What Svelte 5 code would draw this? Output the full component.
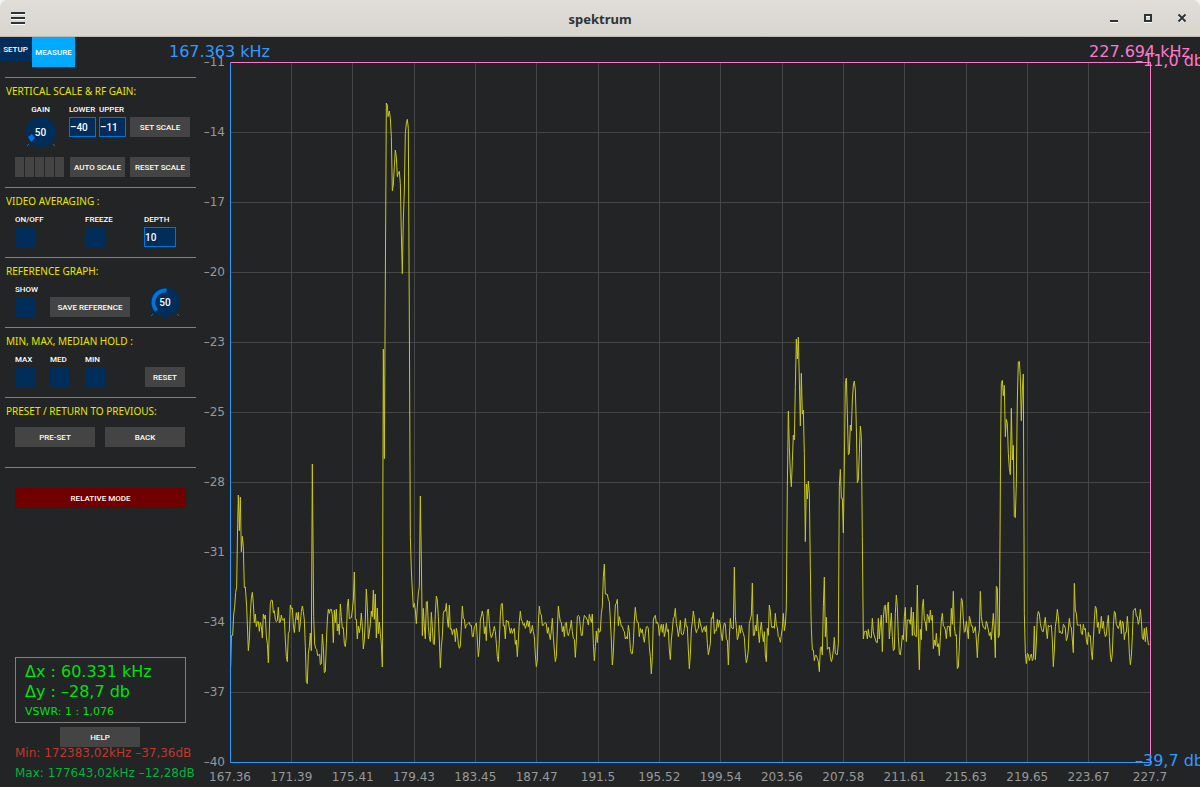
<script>
  const levels = ['–11', '–14', '–17', '–20', '–23', '–25', '–28', '–31', '–34', '–37', '–40'];
  const freqs = ['167.36', '171.39', '175.41', '179.43', '183.45', '187.47', '191.5', '195.52', '199.54', '203.56', '207.58', '211.61', '215.63', '219.65', '223.67', '227.7'];

  // Each run of the sweep has an origin and its samples, in thirds of a unit.
  const runs = [
    { x: 225, y: 440, d: '17,683 19,587 23,586 26,525 29,500 32,457 35,440 38,250 40,165 43,272 46,171 49,335 52,289 55,320 58,443 61,441 65,500 70,632 73,600 76,520 79,475 82,457 85,490 88,548 91,522 94,560 97,545 100,545 103,574 106,547 109,560 112,594 115,522 118,536 121,525 124,590 127,610 130,668 133,570 136,490 139,480 142,481 145,518 148,512 151,538 154,545 157,541 160,502 163,548 166,546 169,525 172,540 175,541 178,535 181,600 184,650 187,665 190,580 193,573 196,495 199,506 202,504 205,555 208,578 211,545 214,518 217,540 220,516 223,575 226,548 229,515 232,498 235,515 238,540 241,620 244,725 247,731 250,640 253,620 256,579 259,632 262,72 266,530 269,612 272,625 275,628 278,647 284,643 286,674 289,671 292,582 295,620 298,698 301,695 304,610 307,540 310,507 313,520 316,508 319,508 322,525 325,608 328,510 331,548 334,507 337,573 340,552 343,584 346,492 349,530 352,565 355,563 358,610 361,620 364,590 367,500 370,477 373,536 379,533 382,510 385,480 388,396 391,538 394,538 397,597 400,558 403,578 406,560 409,519 412,560 415,627 418,600 421,540 424,447 427,500 430,597 433,580 436,550 439,513 442,530 445,450 448,538 451,462 454,594 457,504 460,581 463,546 466,580 469,610 472,681 475,-273 478,56' },
    { x: 370, y: 60, d: '49,129 52,135 54,170 58,153 61,175 64,230 67,392 70,375 73,320 76,270 79,290 82,350 85,338 88,334 91,370 94,520 97,641 100,480 103,390 106,220 109,190 112,178 115,205 118,780' },
    { x: 225, y: 440, d: '556,290 559,390 562,450 565,502 568,490 571,510 574,551 577,500 580,460 583,440 586,168 589,360 592,587 595,505 598,560 601,597 604,486 607,484 610,560 613,590 616,605 619,517 622,560 625,611 628,614 631,520 634,468 637,480 640,530 643,600 646,683 649,620 652,590 655,520' },
    { x: 430, y: 540, d: '43,212 46,213 49,190 52,240 55,262 58,195 61,268 64,266 67,284 70,270 73,268 76,305 79,265 82,280 85,312 88,325 91,318 94,260 97,198 100,235 103,237 106,265 109,256 112,252 115,250 118,247 121,257 124,256 127,290 130,290 133,260 136,256 139,249 142,300 145,350 148,320 151,240 154,228 157,213 160,230 163,281 166,260 169,302 172,213 175,207 178,250 181,280 184,293 187,285 190,275 193,259 196,275 199,310 202,350 205,365 208,300 211,225 214,192 217,190 220,258 223,256 226,297 229,240 232,245 235,244 238,264 241,280 244,265 247,280 250,270 253,265 256,313 259,300 262,350 265,300 268,245 271,213 274,240 277,244 280,256 283,250 286,265 289,256 292,241 295,260 298,243 301,280 304,275 307,256 310,275 313,290 316,345 319,380 322,360 325,250 328,198 331,222 334,224 337,257 340,256 343,250 346,247 349,252 352,280 355,262 358,285 361,299 364,270 367,235 370,290 373,330 376,365 379,350 382,270 385,198 388,225 391,245 394,247 397,275 400,259 403,290 406,250 409,247 412,280 415,287 418,275 421,262 424,241 427,275 430,295 433,298 436,352 439,300 442,230 445,226 448,230 451,260 454,287 457,286 460,245 463,226 466,229 472,240 475,255 478,223 481,235 484,247 487,222 490,310 493,362 496,320 499,273 502,308 505,265 508,277 511,273 514,220 517,200 520,110 523,72 526,162 532,163 535,178 538,185 541,240 544,300 547,375 550,340 553,260 556,195 559,190 562,178 565,257 568,230 571,243 574,259 577,259 580,270 583,275 586,297 589,290 592,297 595,256 598,275 601,325 604,341 607,341 610,310 613,240 616,202 619,235 622,247 625,248 628,290 631,265 634,278 637,268 640,290 643,307 646,280 649,261 652,259 655,265 658,320 661,350 664,402 667,350 670,240 673,230 676,226 679,250 682,246 685,255 688,287 691,265 694,253 697,277 700,253 703,290 706,275 709,250 712,275 715,268 718,330 721,359 724,300 727,270 730,235 733,230 736,205 739,250 742,265 745,290 748,270 751,241 754,282 757,284 760,283 763,265 766,235 769,260 772,260 775,330 778,386 781,345 784,270 787,245 790,213 793,235 796,265 799,278 802,268 805,265 808,235 811,250 814,262 817,277 820,268 823,260 826,275 829,257' },
    { x: 700, y: 540, d: '22,310 25,344 28,330 31,310 34,233 37,235 40,217 43,281 46,270 49,272 52,238 55,262 58,241 61,255 64,285 67,302 70,265 73,249 76,252 79,298 82,300 85,375 88,290 91,235 94,263 100,266 103,81 106,230 109,262 112,299 115,290 118,256 121,280 124,256 127,272 130,280 133,292 136,340 139,368 142,355 145,330 148,250 151,238 154,225 157,129 160,287 163,286 166,256 169,273 172,223 175,275 178,308 181,270 184,246 187,280 190,305 193,275 196,345 199,365 202,265 205,286 208,195 211,213 214,258 217,264 220,258 223,265 226,220 229,256 232,263 235,290 238,293 241,307 244,285 247,262 250,220 253,272 256,255 259,200' },
    { x: 770, y: 320, d: '52,500 55,273 58,380 61,460 64,500 67,425 70,345 73,360 76,200 79,57 82,117 85,51 88,180 91,318 94,160 97,282 100,270 103,400 106,665 109,492 112,537 115,483 118,520 121,740' },
    { x: 700, y: 540, d: '333,220 334,265 337,330 340,330 343,362 346,346 349,346 352,355 355,365 358,395 361,325 364,320 367,345 370,200 373,111 376,290 379,232 382,328 388,321 391,350 394,365 397,355 400,330 403,292 406,341 412,344 415,310' },
    { x: 770, y: 320, d: '208,500 211,448 214,535 217,535 220,639 223,440 226,190 229,174 232,280 235,404 238,400 241,315 244,332 247,240 250,195 253,183 256,210 259,320 262,488 265,480 268,400 271,318 274,350 277,650' },
    { x: 700, y: 540, d: '490,297 493,275 499,273 502,297 505,268 508,290 514,293 517,235 520,275 523,288 529,307 532,308 535,235 538,297 541,255 544,225 547,335 550,235 553,200 556,195 559,248 562,200 565,186 568,297 571,260 574,219 577,290 580,332 583,328 586,220 589,165 592,200 595,290 598,340 601,345 604,320 607,286 610,299 613,230 616,202 619,305 622,240 628,240 631,253 634,202 637,287 640,216 643,285 649,290 652,135 655,290 658,389 661,268 664,299 667,200 670,178 673,240 676,245 679,272 682,223 685,230 688,248 691,210 694,241 697,225 700,326 703,300 706,317 709,280 712,320 715,311 718,347 721,290 724,240 727,220 730,258 733,260 736,270 739,296 742,259 748,259 751,290 754,205 757,253 760,154 763,260 766,287 769,284 772,386 775,381 778,320 781,240 784,175 787,182 790,240 793,277 796,273 799,244 802,268 805,296 808,229 811,240 814,258 817,258 820,279 823,270 826,260 829,300 832,353 835,290 838,270' },
    { x: 980, y: 340, d: '1,754 4,830 7,850 10,862 13,863 16,868 19,844 22,855 25,870 28,887 31,877 34,899 37,860 40,820 43,870 46,953 49,739 52,745 55,893 58,885 60,600 62,300 64,130 67,121 70,167 73,136 76,290 79,238 82,250 85,340 88,385 91,404 94,205 97,360 100,316 103,530 106,533 109,430 112,180 115,66 118,64 121,110 124,242 127,150 130,102 133,820 136,940 139,971 142,940 145,943 148,962 151,950 154,942 157,962 160,955 163,858 166,959 169,910 172,830 175,814 178,822 181,850 184,865 187,874 190,875 193,850 196,832 199,870 202,896 205,856 208,860 214,856 217,900 220,980 223,930 226,860 229,840 232,808 235,830 238,878 241,874 244,880 247,880 250,853 253,856 256,865 259,902 262,893 265,870 268,835 271,860 274,862 277,900 280,938 283,730 286,810 289,820 292,855 298,856 301,853 304,880 307,884 310,853 313,870 316,865 319,900 322,914 325,877 328,889 331,887 334,935 337,959 340,900 343,840 346,799 349,805 352,862 355,847 358,881 361,865 364,829 367,865 370,844 373,875 376,890 379,885 382,850 385,826 388,890 391,945 394,965 397,940 400,860 403,814 406,818 409,853 415,866 418,856 421,841 424,881 427,844 430,850 433,899 436,878 439,877 442,829 445,870 448,940 451,974 454,950 457,890 460,812 466,805 469,829 472,830 475,853 478,840 481,808 484,840 487,893 490,899 493,865 496,905 499,862 502,890 505,914 508,914' }
  ];

  const trace = runs
    .flatMap((r) =>
      r.d.split(' ').map((p) => {
        const [px, py] = p.split(',').map(Number);
        return `${(r.x + px / 3 - 230.5).toFixed(2)},${(r.y + py / 3 - 62.5).toFixed(2)}`;
      })
    )
    .join(' ');
</script>

<div class="window">
  <header class="titlebar">
    <button class="icon" aria-label="Menu">
      <svg width="16" height="14" viewBox="0 0 16 14"><path d="M1 2h14v2H1zM1 7h14v2H1zM1 12h14v2H1z" fill="#fff" /><path d="M1 1h14v2H1zM1 6h14v2H1zM1 11h14v2H1z" fill="#2e3436" /></svg>
    </button>
    <h1>spektrum</h1>
    <div class="controls">
      <button class="icon" aria-label="Minimize"><svg width="10" height="10" viewBox="0 0 10 10"><path d="M1 8h8v2H1z" fill="#fff" /><path d="M1 7h8v2H1z" fill="#2e3436" /></svg></button>
      <button class="icon" aria-label="Maximize"><svg width="10" height="10" viewBox="0 0 10 10"><path d="M2 3h6v6H2z" fill="none" stroke="#fff" stroke-width="2" /><path d="M2 2h6v6H2z" fill="none" stroke="#2e3436" stroke-width="2" /></svg></button>
      <button class="icon" aria-label="Close"><svg width="10" height="10" viewBox="0 0 10 10"><path d="M2 3l6 6M8 3l-6 6" stroke="#fff" stroke-width="2" /><path d="M1.5 1.5l7 7M8.500 1.500l-7 7" stroke="#2e3436" stroke-width="2" /></svg></button>
    </div>
  </header>

  <main>
    <aside>
      <nav>
        <button class="tab">SETUP</button>
        <button class="tab active">MEASURE</button>
      </nav>

      <section>
        <h2>VERTICAL SCALE &amp; RF GAIN:</h2>
        <div class="row scale">
          <div class="field knobfield">
            <label for="gain">GAIN</label>
            <div class="knob">
              <svg viewBox="0 0 30 30"><circle cx="15" cy="15" r="15" fill="#002d5a" /><path d="M2 20l4-3 3 4-4 4z" fill="#0074d9" /><path d="M1 29l2-2M27 27l2 2" stroke="#0074d9" /></svg>
              <output for="gain">50</output>
              <input id="gain" type="range" value="50" />
            </div>
          </div>
          <div class="field"><label for="lower">LOWER</label><input id="lower" class="num" value="–40" /></div>
          <div class="field"><label for="upper">UPPER</label><input id="upper" class="num" value="–11" /></div>
          <button class="btn drop">SET SCALE</button>
        </div>
        <div class="row auto">
          <div class="meter"><i></i><i></i><i></i><i></i><i></i></div>
          <button class="btn">AUTO SCALE</button>
          <button class="btn">RESET SCALE</button>
        </div>
      </section>

      <section>
        <h2>VIDEO AVERAGING :</h2>
        <div class="row video">
          <div class="field"><label for="avg">ON/OFF</label><input id="avg" type="checkbox" /></div>
          <div class="field"><label for="freeze">FREEZE</label><input id="freeze" type="checkbox" /></div>
          <div class="field"><label for="depth">DEPTH</label><input id="depth" class="num" value="10" /></div>
        </div>
      </section>

      <section>
        <h2>REFERENCE GRAPH:</h2>
        <div class="row reference">
          <div class="field"><label for="show">SHOW</label><input id="show" type="checkbox" /></div>
          <button class="btn wide">SAVE REFERENCE</button>
          <div class="knob">
            <svg viewBox="0 0 30 30"><circle cx="15" cy="15" r="15" fill="#002d5a" /><path d="M6.500 23.500A12 12 0 0 1 16.500 3.500" fill="none" stroke="#0074d9" stroke-width="4" /><path d="M1 29l2-2M27 27l2 2" stroke="#0074d9" /></svg>
            <output for="refpos">50</output>
            <input id="refpos" type="range" value="50" aria-label="Reference position" />
          </div>
        </div>
      </section>

      <section>
        <h2>MIN, MAX, MEDIAN HOLD :</h2>
        <div class="row hold">
          <div class="field"><label for="max">MAX</label><input id="max" type="checkbox" /></div>
          <div class="field"><label for="med">MED</label><input id="med" type="checkbox" /></div>
          <div class="field"><label for="min">MIN</label><input id="min" type="checkbox" /></div>
          <button class="btn">RESET</button>
        </div>
      </section>

      <section class="preset">
        <h2>PRESET / RETURN TO PREVIOUS:</h2>
        <div class="row pair">
          <button class="btn">PRE-SET</button>
          <button class="btn">BACK</button>
        </div>
      </section>

      <section class="mode"><button class="btn relative">RELATIVE MODE</button></section>

      <footer>
        <div class="delta">
          <p>Δx : 60.331 kHz</p>
          <p>Δy : –28,7 db</p>
          <p class="small">VSWR: 1 : 1,076</p>
        </div>
        <button class="btn help">HELP</button>
        <p class="stat low">Min: 172383,02kHz –37,36dB</p>
        <p class="stat high">Max: 177643,02kHz –12,28dB</p>
      </footer>
    </aside>

    <div class="chart">
      <div class="yaxis">{#each levels as l}<span>{l}</span>{/each}</div>
      <div class="plot">
        <svg viewBox="-0.5 -0.5 920 700" preserveAspectRatio="none">
          <g class="grid">
            {#each freqs as _, i}<line x1={Math.round((i * 920) / 15 - 0.2)} x2={Math.round((i * 920) / 15 - 0.2)} y1="0" y2="700" />{/each}
            {#each levels as _, i}<line x1="0" x2="920" y1={i * 70} y2={i * 70} />{/each}
          </g>
          <polyline points={trace} />
          <path class="blue" d="M0 0V700H920" />
          <path class="pink" d="M0 0H920V700" />
        </svg>
        <span class="cursor left">167.363 kHz</span>
        <span class="cursor right">227.694 kHz</span>
        <span class="cursor top">–11,0 db</span>
        <span class="cursor bottom">–39,7 db</span>
      </div>
      <div class="xaxis">{#each freqs as f}<span>{f}</span>{/each}</div>
    </div>
  </main>
</div>

<style>
  :global(body) { margin: 0; background: #f4f4f4; }
  * { box-sizing: border-box; }
  p, h1, h2 { margin: 0; font-weight: normal; }
  button, input { font: inherit; color: inherit; border: 0; border-radius: 0; padding: 0; margin: 0; }
  .window { min-height: 100vh; display: flex; flex-direction: column; overflow: hidden; font-family: "DejaVu Sans", sans-serif; font-size: 12px; }
  .titlebar { height: 37px; display: grid; grid-template-columns: 1fr auto 1fr; align-items: center; padding: 0 8px; background: linear-gradient(#e1deda, #d8d4ce); border-bottom: 1px solid #bfb8af; border-radius: 7px 7px 0 0; }
  h1 { font: bold 13px/20px "Noto Sans", sans-serif; color: #2e3436; padding-top: 1px; }
  .icon { width: 20px; height: 20px; background: none; display: flex; align-items: center; justify-content: center; }
  .controls { display: flex; justify-content: flex-end; gap: 14px; }
  main { flex: 1; display: grid; grid-template-columns: 200px minmax(0, 1fr); background: #222426; }

  aside { display: flex; flex-direction: column; font: 500 8px/15px "Roboto", sans-serif; color: #fff; }
  nav { display: flex; align-items: flex-start; gap: 1px; height: 40px; }
  .tab { width: 31px; height: 24px; padding-top: 1px; background: #002d5a; }
  .tab.active { width: 43px; height: 30px; background: #00aaff; }
  section { margin: 0 4px 0 5px; padding-bottom: 10px; border-top: 1px solid #808080; }
  h2 { font: 10px/24px "Noto Sans", sans-serif; color: #e6e600; padding: 1px 0 0 1px; height: 24px; white-space: nowrap; }
  .row { display: grid; align-items: end; padding-left: 10px; }
  .scale { grid-template-columns: 51px 27px 28px 60px; gap: 3px; align-items: start; }
  .auto { grid-template-columns: 50px 55px 60px; gap: 5px; padding-top: 10px; }
  .video { grid-template-columns: 70px 59px 32px; }
  .reference { grid-template-columns: 35px 100px 30px; }
  .hold { grid-template-columns: 35px 35px 60px 40px; }
  .pair { grid-template-columns: 80px 80px; gap: 10px; padding-top: 5px; }
  .preset { padding-bottom: 20px; }
  .mode { padding: 20px 10px 0; }
  .field { display: flex; flex-direction: column; white-space: nowrap; }
  .knobfield { align-items: center; }
  .num { width: 100%; height: 20px; padding-top: 1px; background: #002d5a; border: 1px solid #0074d9; font-size: 10px; }
  #upper { width: 27px; }
  input[type='checkbox'] { appearance: none; width: 20px; height: 20px; background: #002d5a; }
  .btn { height: 20px; padding-top: 1px; background: #444; color: #fffff0; white-space: nowrap; }
  .drop { margin-top: 15px; }
  .wide { width: 80px; }
  .relative { width: 100%; background: #700000; }
  .knob { position: relative; width: 30px; height: 30px; display: grid; }
  .knob > * { grid-area: 1 / 1; }
  .knob svg { width: 30px; height: 30px; }
  .knob output { position: relative; place-self: center; padding-top: 1px; font-size: 10px; }
  .knob input { width: 30px; height: 30px; opacity: 0; position: relative; }
  .meter { display: flex; gap: 1px; }
  .meter i { width: 9px; height: 20px; background: #444; }

  footer { margin-top: auto; padding: 0 14px 8px 15px; font: 12px/12px "DejaVu Sans", sans-serif; display: flex; flex-direction: column; }
  .delta { border: 1px solid #808080; padding: 4px 9px 0; color: #00e010; font-size: 16px; line-height: 20px; white-space: nowrap; }
  .small { font-size: 11px; }
  .help { width: 80px; margin: 4px 0 0 45px; font: 500 8px/15px "Roboto", sans-serif; }
  .stat { white-space: nowrap; }
  .low { color: #c0392b; }
  .high { color: #00b33c; margin-top: 8px; }

  .chart { display: grid; grid-template-columns: 30px minmax(0, 1fr) 50px; grid-template-rows: 25px minmax(0, 1fr) 25px; color: #999; }
  .yaxis { grid-area: 2 / 1; display: flex; flex-direction: column; justify-content: space-between; padding-right: 5px; text-align: right; }
  .yaxis span { height: 0; line-height: 0; }
  .plot { grid-area: 2 / 2; position: relative; }
  .plot svg { position: absolute; width: 100%; height: 100%; overflow: visible; fill: none; }
  line, path, polyline { vector-effect: non-scaling-stroke; }
  .grid { stroke: #464646; shape-rendering: crispEdges; }
  polyline { stroke: #c8c81e; stroke-linejoin: bevel; }
  .blue { stroke: #3399ff; }
  .pink { stroke: #ff77cc; }
  .xaxis { grid-area: 3 / 2; display: flex; justify-content: space-between; padding-top: 6px; line-height: 19px; }
  .xaxis span { width: 0; display: flex; justify-content: center; }
  .cursor { position: absolute; font-size: 16px; line-height: 20px; white-space: nowrap; }
  .left { left: -61px; top: -20px; color: #3399ff; }
  .right { right: -40px; top: -20px; color: #ff77cc; }
  .top { left: 100%; top: -11px; margin-left: -15px; color: #ff77cc; }
  .bottom { left: 100%; bottom: -9px; margin-left: -15px; color: #3399ff; }
</style>
